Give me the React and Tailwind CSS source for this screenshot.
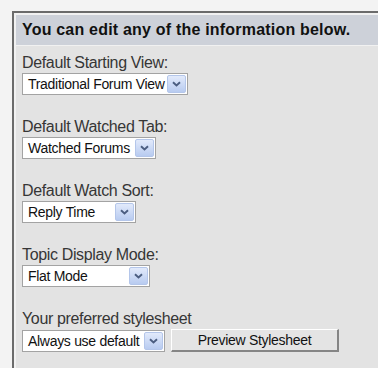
import React from "react";

function Arrow() {
  return (
    <div className="mr-px flex h-[18px] w-[19px] items-center justify-center rounded-[2px] border border-[#b4c6ea] bg-gradient-to-b from-[#e2eafb] to-[#b8cbf0]">
      <svg width="9" height="6" viewBox="0 0 9 6">
        <path d="M1 1.2 L4.5 4.4 L8 1.2" fill="none" stroke="#4b5d80" strokeWidth="1.9" />
      </svg>
    </div>
  );
}

function Select({ text, w }) {
  return (
    <div
      className="flex h-[22px] items-center border border-[#a3a3a3] bg-white"
      style={{ width: w }}
    >
      <span className="flex-1 truncate pl-[5px] text-[14px] leading-[18px] tracking-[-0.3px] text-[#111]">
        {text}
      </span>
      <Arrow />
    </div>
  );
}

function Label({ children }) {
  return (
    <div className="h-[18px] text-[16px] leading-[18px] tracking-[-0.35px] text-[#363636]">
      {children}
    </div>
  );
}

export default function App() {
  return (
    <div
      className="h-[368px] w-[378px] overflow-hidden bg-[#f3f3f3] pl-3 pt-[11px]"
      style={{ fontFamily: '"Liberation Sans", Arial, sans-serif' }}
    >
      <div className="h-[420px] w-[420px] border-l-2 border-t-2 border-[#6b6b6b] bg-[#f1f1f1] pl-[2px] pt-[2px]">
        <div className="flex h-[30px] items-center bg-[#cdd1d9] pl-[6px] text-[16px] font-bold leading-[18px] tracking-[0.2px] text-[#111]">
          You can edit any of the information below.
        </div>
        <div className="mt-px h-[400px] bg-[#e3e3e3] pl-[6px] pt-[8px]">
          <div className="flex flex-col gap-[23px]">
            <div className="flex flex-col gap-px">
              <Label>Default Starting View:</Label>
              <Select text="Traditional Forum View" w={166} />
            </div>
            <div className="flex flex-col gap-px">
              <Label>Default Watched Tab:</Label>
              <Select text="Watched Forums" w={134} />
            </div>
            <div className="flex flex-col gap-px">
              <Label>Default Watch Sort:</Label>
              <Select text="Reply Time" w={114} />
            </div>
            <div className="flex flex-col gap-px">
              <Label>Topic Display Mode:</Label>
              <Select text="Flat Mode" w={128} />
            </div>
            <div className="flex flex-col gap-px">
              <Label>Your preferred stylesheet</Label>
              <div className="flex items-center gap-[6px]">
                <Select text="Always use default" w={143} />
                <button className="h-[23px] w-[168px] border-l border-t border-b-2 border-r-2 border-l-white border-t-white border-b-[#858585] border-r-[#858585] bg-[#e4e4e4] text-[14px] leading-[18px] tracking-[-0.3px] text-[#111]">
                  Preview Stylesheet
                </button>
              </div>
            </div>
          </div>
        </div>
      </div>
    </div>
  );
}
